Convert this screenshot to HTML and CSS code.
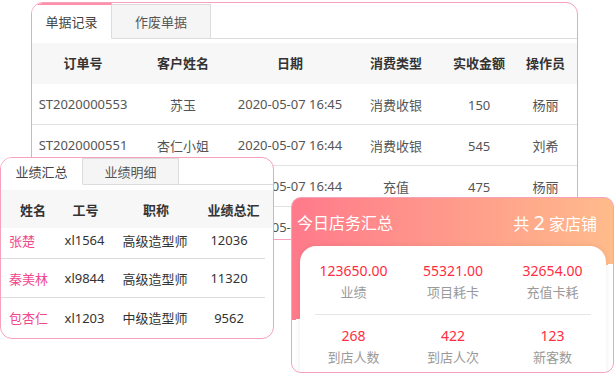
FILE: index.html
```html
<!DOCTYPE html>
<html lang="zh-CN">
<head>
  <meta charset="UTF-8" />
  <meta name="viewport" content="width=device-width, initial-scale=1" />
  <title>店务汇总</title>
  <link rel="stylesheet" href="styles.css">
</head>
<body>

  <!-- 单据记录 -->
  <div class="panel records">
    <div class="tabs">
      <span class="tab active">单据记录</span>
      <span class="tab">作废单据</span>
    </div>
    <div class="rec-row rec-head">
      <span>订单号</span><span>客户姓名</span><span>日期</span><span>消费类型</span><span>实收金额</span><span>操作员</span>
    </div>
    <div class="rec-row">
      <span>ST2020000553</span><span>苏玉</span><span>2020-05-07 16:45</span><span>消费收银</span><span><i class="clip">1500</i></span><span>杨丽</span>
    </div>
    <div class="rec-row">
      <span>ST2020000551</span><span>杏仁小姐</span><span>2020-05-07 16:44</span><span>消费收银</span><span><i class="clip">5450</i></span><span>刘希</span>
    </div>
    <div class="rec-row">
      <span>ST2020000550</span><span>苏玉</span><span>2020-05-07 16:44</span><span>充值</span><span><i class="clip">4750</i></span><span>杨丽</span>
    </div>
    <div class="rec-row">
      <span>ST2020000549</span><span>苏玉</span><span>2020-05-07 16:40</span><span>充值</span><span><i class="clip">2000</i></span><span>杨丽</span>
    </div>
  </div>

  <!-- 业绩汇总 -->
  <div class="panel perf">
    <div class="tabs small">
      <span class="tab active">业绩汇总</span>
      <span class="tab">业绩明细</span>
    </div>
    <div class="perf-row perf-head">
      <span>姓名</span><span>工号</span><span>职称</span><span>业绩总汇</span>
    </div>
    <div class="perf-row first">
      <span class="name">张楚</span><span>xl1564</span><span>高级造型师</span><span class="num">12036</span>
    </div>
    <div class="perf-row">
      <span class="name">秦美林</span><span>xl9844</span><span>高级造型师</span><span class="num">11320</span>
    </div>
    <div class="perf-row last">
      <span class="name">包杏仁</span><span>xl1203</span><span>中级造型师</span><span class="num">9562</span>
    </div>
  </div>

  <!-- 今日店务汇总 -->
  <div class="panel summary">
    <div class="summary-head">
      <span class="title">今日店务汇总</span>
      <span class="shops">共 <b>2</b> 家店铺</span>
    </div>
    <div class="summary-body">
      <div class="stats">
        <div class="stat"><div class="val">123650.00</div><div class="lbl">业绩</div></div>
        <div class="stat"><div class="val">55321.00</div><div class="lbl">项目耗卡</div></div>
        <div class="stat"><div class="val">32654.00</div><div class="lbl">充值卡耗</div></div>
      </div>
      <div class="stats second">
        <div class="stat"><div class="val">268</div><div class="lbl">到店人数</div></div>
        <div class="stat"><div class="val">422</div><div class="lbl">到店人次</div></div>
        <div class="stat"><div class="val">123</div><div class="lbl">新客数</div></div>
      </div>
    </div>
  </div>

</body>
</html>
```

FILE: styles.css
```css
body {
  margin: 0;
  width: 615px;
  height: 374px;
  position: relative;
  overflow: hidden;
  background: #fff;
  font-family: "Noto Sans", "Noto Sans CJK SC", sans-serif;
  font-size: 13px;
  color: #444;
}
.panel {
  position: absolute;
  box-sizing: border-box;
  border: 1px solid #f6a2ba;
  background: #fff;
  overflow: hidden;
}

/* tabs */
.tabs {
  display: flex;
  height: 36px;
  box-sizing: border-box;
  border-bottom: 1px solid #dcdcdc;
}
.tab {
  box-sizing: border-box;
  display: flex;
  align-items: center;
  justify-content: center;
  color: #555;
}
.tabs .tab {
  width: 99px;
  margin-top: 1px;
  margin-bottom: -1px;
  background: #f5f5f5;
  border: 1px solid #dcdcdc;
  border-left: none;
}
.tabs .tab.active {
  width: 80px;
  margin-top: 0;
  background: #fff;
  border: none;
  border-top: 2px solid #ff8fab;
  border-right: 1px solid #dcdcdc;
  border-bottom: 1px solid #fff;
  color: #444;
}

/* records */
.records {
  left: 31px;
  top: 2px;
  width: 547px;
  height: 238px;
  border-radius: 12px;
}
.rec-row {
  display: grid;
  grid-template-columns: 102px 98px 116px 96px 70px 1fr;
  height: 41px;
  box-sizing: border-box;
  border-bottom: 1px solid #e2e2e2;
  align-items: center;
  text-align: center;
  color: #555;
}
.rec-head {
  margin-top: 4px;
  background: #f7f7f7;
  border-bottom: none;
  font-weight: bold;
  color: #333;
  padding-bottom: 2px;
}
.clip {
  display: inline-block;
  width: 22px;
  overflow: hidden;
  white-space: nowrap;
  font-style: normal;
  vertical-align: middle;
  text-align: left;
}

/* performance */
.perf {
  left: 0;
  top: 157px;
  width: 274px;
  height: 182px;
  border-radius: 12px;
  z-index: 2;
}
.tabs.small {
  height: 27px;
}
.tabs.small .tab {
  width: 96px;
  margin-top: 0;
}
.tabs.small .tab.active {
  width: 82px;
  border-top: none;
}
.perf-row {
  display: grid;
  grid-template-columns: 59px 49px 92px 1fr;
  height: 39px;
  box-sizing: border-box;
  border-bottom: 1px solid #dcdcdc;
  align-items: center;
  text-align: center;
  color: #333;
  margin: 0 8px 0 0;
}
.perf-head {
  margin: 5px 0 0;
  height: 38px;
  background: #f7f7f7;
  border-bottom: none;
  font-weight: bold;
  padding: 0 8px 0 4px;
  grid-template-columns: 56px 49px 92px 1fr;
}
.perf-row.first {
  height: 31px;
  padding-bottom: 6px;
}
.perf-row.last {
  border-bottom: none;
}
.perf-row .name {
  text-align: left;
  padding-left: 8px;
  color: #f0488b;
}
.perf-row .num {
  padding-right: 8px;
}

/* summary */
.summary {
  left: 291px;
  top: 197px;
  width: 323px;
  height: 176px;
  border-radius: 10px;
  z-index: 3;
  background:
    linear-gradient(170deg, transparent 53%, #fff 53%),
    linear-gradient(90deg, #ff7a8b, #ffbb8b);
}
.summary-head {
  display: flex;
  justify-content: space-between;
  align-items: center;
  height: 48px;
  padding: 0 16px 0 5px;
  color: #fff;
  font-size: 16px;
}
.shops b {
  font-weight: normal;
  font-size: 20px;
}
.summary-body {
  margin: 0 7px 0 8px;
  height: 140px;
  background: #fff;
  border-radius: 16px 16px 0 0;
  box-shadow: 0 0 6px rgba(0, 0, 0, 0.08);
}
.stats {
  display: grid;
  grid-template-columns: repeat(3, 1fr);
  text-align: center;
  padding: 16px 0 12px;
  margin: 0 15px;
  border-bottom: 1px solid #e6e6e6;
}
.stats .stat:first-child {
  margin-left: -15px;
}
.stats .stat:last-child {
  margin-right: -15px;
}
.stats.second {
  border-bottom: none;
  padding-top: 12px;
}
.val {
  color: #ff2d3f;
  font-size: 14px;
  line-height: 18px;
}
.lbl {
  color: #999;
  line-height: 20px;
  margin-top: 2px;
}
```
